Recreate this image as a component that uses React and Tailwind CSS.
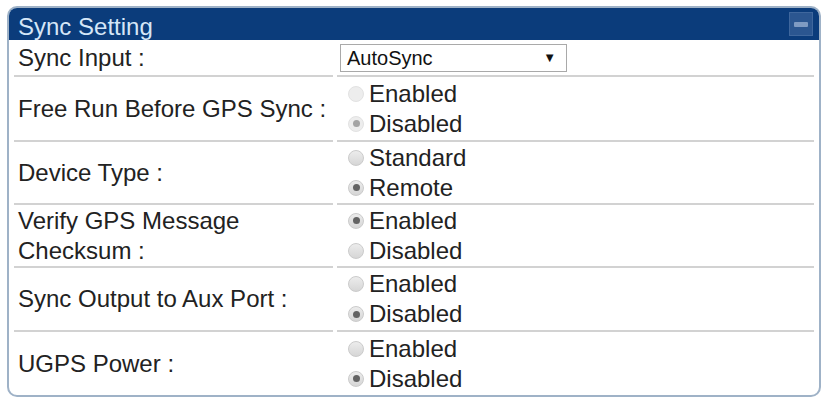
import React from 'react';

const rows = [
  { label: ['Free Run Before GPS Sync :'], options: ['Enabled', 'Disabled'], checked: 1, disabled: true, h: 'h-[65px]' },
  { label: ['Device Type :'], options: ['Standard', 'Remote'], checked: 1, h: 'h-[63px]' },
  { label: ['Verify GPS Message', 'Checksum :'], options: ['Enabled', 'Disabled'], checked: 0, h: 'h-[63px]' },
  { label: ['Sync Output to Aux Port :'], options: ['Enabled', 'Disabled'], checked: 1, h: 'h-[64px]' },
  { label: ['UGPS Power :'], options: ['Enabled', 'Disabled'], checked: 1, h: 'h-[63px]', last: true },
];

function Radio({ on, disabled }) {
  return (
    <span
      className={`w-[16px] h-[16px] rounded-full flex items-center justify-center shrink-0 border ${
        disabled ? 'border-[#e2e2e2] bg-[#ededed]' : 'border-[#cbcbcb] bg-[linear-gradient(#ececec,#d6d6d6)]'
      }`}
    >
      {on && <span className={`w-[7px] h-[7px] rounded-full ${disabled ? 'bg-[#a4a4a4]' : 'bg-[#636363]'}`} />}
    </span>
  );
}

function Row({ row }) {
  const line = row.last ? '' : 'border-b-2 border-[#d2d2d2]';
  return (
    <div className="grid grid-cols-[319px_1fr] gap-x-[4px]">
      <div className={`${row.h} ${line} flex flex-col justify-center pl-[4px] leading-[30px]`}>
        {row.label.map((l) => (
          <span key={l}>{l}</span>
        ))}
      </div>
      <div className={`${row.h} ${line} flex flex-col justify-center pl-[11px] leading-[30px]`}>
        {row.options.map((o, i) => (
          <div key={o} className="flex items-center gap-[5px]">
            <Radio on={row.checked === i} disabled={row.disabled} />
            <span>{o}</span>
          </div>
        ))}
      </div>
    </div>
  );
}

export default function App() {
  return (
    <div className="w-[828px] h-[401px] bg-white pt-[6px] px-[7px] text-[#222222] text-[24px]" style={{ fontFamily: '"Liberation Sans", Arial, sans-serif' }}>
      <div className="h-[391px] rounded-[10px] border-2 border-[#9fb2c7] overflow-hidden bg-white">
        <div className="h-[32px] bg-[#0b3c7b] flex items-center justify-between pl-[9px] pr-[6px]">
          <span className="text-[#d5e6f7] leading-none pt-[5px]">Sync Setting</span>
          <div className="w-[24px] h-[24px] bg-[#2b5690] border border-[#3f679d] flex items-center justify-center">
            <div className="w-[14px] h-[5px] rounded-[1px] bg-[#7f9bc2]" />
          </div>
        </div>
        <div className="px-[5px]">
          <div className="grid grid-cols-[319px_1fr] gap-x-[4px]">
            <div className="h-[37px] border-b-2 border-[#d2d2d2] flex items-center pl-[4px]">Sync Input :</div>
            <div className="h-[37px] border-b-2 border-[#d2d2d2] flex items-center pl-[3px]">
              <div className="w-[227px] h-[28px] border border-[#a9a9a9] bg-white flex items-center justify-between pl-[6px] pr-[10px] text-[20px] text-[#111]">
                <span>AutoSync</span>
                <span className="text-[13px]">▼</span>
              </div>
            </div>
          </div>
          {rows.map((r) => (
            <Row key={r.label[0]} row={r} />
          ))}
        </div>
      </div>
    </div>
  );
}
